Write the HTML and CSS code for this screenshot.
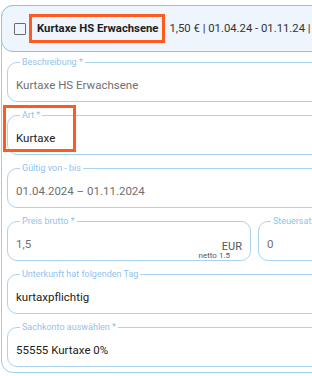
FILE: index.html
```html
<!DOCTYPE html>
<html lang="de">
<head>
  <meta charset="UTF-8" />
  <meta name="viewport" content="width=device-width, initial-scale=1" />
  <title>Kurtaxe</title>
  <link rel="stylesheet" href="styles.css">
</head>
<body>
  <div class="panel">
    <div class="panel-head">
      <span class="check"></span>
      <span class="title mark">Kurtaxe HS Erwachsene</span>
      <span class="summary">1,50 € | 01.04.24 - 01.11.24 | 0 %</span>
    </div>
    <div class="panel-body">
      <fieldset class="field">
        <legend>Beschreibung *</legend>
        <div class="value muted">Kurtaxe HS Erwachsene</div>
      </fieldset>

      <div class="mark-wrap">
        <fieldset class="field">
          <legend>Art *</legend>
          <div class="value">Kurtaxe</div>
        </fieldset>
        <div class="mark art-mark"></div>
      </div>

      <fieldset class="field">
        <legend>Gültig von - bis</legend>
        <div class="value muted">01.04.2024 – 01.11.2024</div>
      </fieldset>

      <div class="field-row">
        <fieldset class="field price">
          <legend>Preis brutto *</legend>
          <div class="value muted price-line">
            <span>1,5</span>
            <span class="unit">EUR</span>
          </div>
          <div class="hint">netto 1.5</div>
        </fieldset>
        <fieldset class="field tax">
          <legend>Steuersatz *</legend>
          <div class="value muted">0</div>
        </fieldset>
      </div>

      <fieldset class="field">
        <legend>Unterkunft hat folgenden Tag</legend>
        <div class="value">kurtaxpflichtig</div>
      </fieldset>

      <fieldset class="field">
        <legend>Sachkonto auswählen *</legend>
        <div class="value">55555 Kurtaxe 0%</div>
      </fieldset>
    </div>
  </div>
</body>
</html>
```

FILE: styles.css
```css
html, body {
  margin: 0;
  padding: 0;
  background: #fff;
  overflow: hidden;
}
body {
  font-family: Roboto, "Liberation Sans", sans-serif;
  color: #212121;
  padding: 5px 0 0 1px;
}
.panel {
  width: 420px;
  border: 1px solid #9fcdf0;
  border-radius: 12px;
}
.panel-head {
  display: flex;
  align-items: center;
  margin: -1px -1px 0 -1px;
  padding: 8px 12px;
  background: #eef5fc;
  border: 1px solid #8cc3ee;
  border-radius: 12px;
  white-space: nowrap;
}
.check {
  width: 10px;
  height: 10px;
  border: 1.5px solid #6b6b6b;
  border-radius: 1px;
  margin-right: 3px;
  flex: none;
}
.mark {
  border: 3px solid #ff5a1f;
}
.title {
  font-weight: bold;
  font-size: 11.3px;
  line-height: 17px;
  padding: 3px 4px 3px 5px;
  color: #1d1d1d;
}
.summary {
  font-size: 11.3px;
  color: #333;
  margin-left: 4px;
}
.panel-body {
  display: flex;
  flex-direction: column;
  gap: 8px;
  padding: 5px;
}
.field {
  margin: 0;
  padding: 0 8px 8px;
  min-width: 0;
  border: 1px solid #a9d3f2;
  border-radius: 10px;
}
.field legend {
  font-size: 9px;
  line-height: 10px;
  color: #8fc3ec;
  padding: 0 2px;
  margin-left: 4px;
}
.value {
  font-size: 11.5px;
  line-height: 16px;
  padding-top: 10px;
  white-space: nowrap;
}
.muted {
  color: #6f6f6f;
}
.mark-wrap {
  position: relative;
}
.art-mark {
  position: absolute;
  box-sizing: border-box;
  left: -4px;
  top: -5px;
  width: 73px;
  height: 47px;
}
.field-row {
  display: flex;
  gap: 7px;
}
.price {
  width: 244px;
  box-sizing: border-box;
  flex: none;
  padding-bottom: 0;
}
.tax {
  flex: 1;
}
.price-line {
  display: flex;
  justify-content: space-between;
  align-items: flex-end;
}
.unit {
  font-size: 11px;
  line-height: 11px;
  color: #555;
}
.hint {
  font-size: 8px;
  line-height: 8px;
  color: #555;
  text-align: right;
  margin-right: 12px;
}
```
